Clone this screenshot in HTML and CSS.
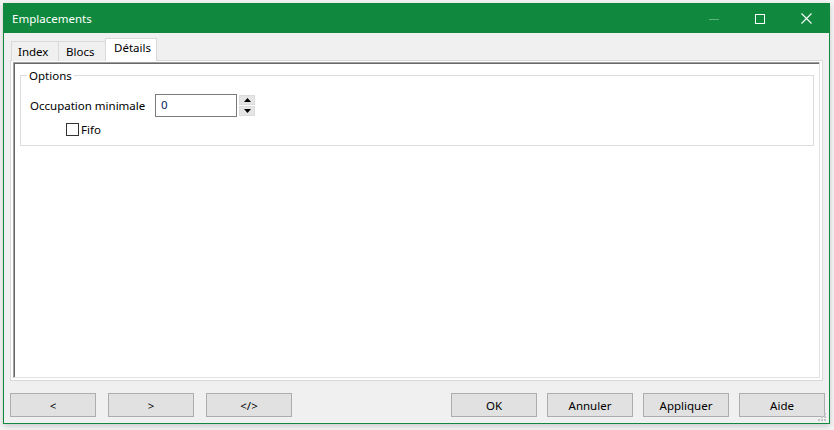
FILE: index.html
```html
<!DOCTYPE html>
<html lang="fr">
<head>
<meta charset="utf-8">
<title>Emplacements</title>
<link rel="stylesheet" href="styles.css">
</head>
<body>
<div class="window">
  <div class="titlebar">
    <span class="title">Emplacements</span>
    <div class="controls">
      <div class="cbtn"><svg width="10" height="10" viewBox="0 0 10 10"><line x1="0" y1="5.5" x2="10" y2="5.5" stroke="#5fb27f" stroke-width="1"/></svg></div>
      <div class="cbtn"><svg width="10" height="10" viewBox="0 0 10 10"><rect x="0.5" y="0.5" width="9" height="9" fill="none" stroke="#fff" stroke-width="1"/></svg></div>
      <div class="cbtn"><svg width="11" height="11" viewBox="0 0 11 11"><path d="M0.5 0.5 L10.5 10.5 M10.5 0.5 L0.5 10.5" stroke="#fff" stroke-width="1.1"/></svg></div>
    </div>
  </div>
  <div class="client">
    <div class="tabs">
      <div class="tab tab-index">Index</div>
      <div class="tab tab-blocs">Blocs</div>
      <div class="tab tab-details active">Détails</div>
    </div>
    <div class="pane">
      <div class="sheet">
        <fieldset class="group">
          <legend>Options</legend>
          <div class="row">
            <span class="label">Occupation minimale</span>
            <div class="input">0</div>
            <div class="spin">
              <div class="spin-btn"><svg width="7" height="4" viewBox="0 0 7 4"><path d="M3.5 0 L7 4 L0 4 Z" fill="#000"/></svg></div>
              <div class="spin-btn"><svg width="7" height="4" viewBox="0 0 7 4"><path d="M0 0 L7 0 L3.5 4 Z" fill="#000"/></svg></div>
            </div>
          </div>
          <div class="check"><span class="box"></span><span>Fifo</span></div>
        </fieldset>
      </div>
    </div>
    <div class="buttons">
      <div class="btn-group">
        <div class="btn">&lt;</div>
        <div class="btn">&gt;</div>
        <div class="btn">&lt;/&gt;</div>
      </div>
      <div class="btn-group right">
        <div class="btn">OK</div>
        <div class="btn">Annuler</div>
        <div class="btn">Appliquer</div>
        <div class="btn">Aide</div>
      </div>
    </div>
    <svg class="grip" width="9" height="9" viewBox="0 0 9 9">
      <rect x="6" y="0" width="2" height="2" fill="#c4c4c4"/>
      <rect x="3" y="3" width="2" height="2" fill="#c4c4c4"/>
      <rect x="6" y="3" width="2" height="2" fill="#c4c4c4"/>
      <rect x="0" y="6" width="2" height="2" fill="#c4c4c4"/>
      <rect x="3" y="6" width="2" height="2" fill="#c4c4c4"/>
      <rect x="6" y="6" width="2" height="2" fill="#c4c4c4"/>
    </svg>
  </div>
</div>
</body>
</html>
```
FILE: styles.css
```css
* { box-sizing: border-box; }
html, body { margin: 0; padding: 0; }
body {
  background: #f4f4f4;
  font-family: "Noto Sans", "Open Sans", sans-serif;
  font-size: 11.5px;
  color: #000;
  width: 834px;
  height: 430px;
  overflow: hidden;
  padding: 3px 0 0 3px;
}
.window {
  width: 827px;
  height: 421px;
  border: 1px solid #10893e;
  background: #f0f0f0;
  display: flex;
  flex-direction: column;
  box-shadow: 0 2px 6px rgba(0,0,0,0.18);
}
.titlebar {
  height: 29px;
  background: #10893e;
  display: flex;
  align-items: center;
  flex: none;
}
.title {
  color: #fff;
  padding-left: 8px;
  font-size: 11.5px;
  flex: 1;
}
.controls { display: flex; height: 29px; }
.cbtn {
  width: 46px;
  height: 29px;
  display: flex;
  align-items: center;
  justify-content: center;
}
.cbtn svg { display: block; }
.client {
  flex: 1;
  display: flex;
  flex-direction: column;
  padding: 5px 6px 6px 6px;
  position: relative;
}
.tabs {
  display: flex;
  align-items: flex-end;
  height: 23px;
  padding-left: 1px;
  position: relative;
  z-index: 1;
}
.tab {
  height: 20px;
  border: 1px solid #d9d9d9;
  border-bottom: none;
  background: #f0f0f0;
  margin-right: -1px;
  line-height: 18px;
  padding-top: 1px;
}
.tab-index { width: 48px; padding-left: 6px; }
.tab-blocs { width: 48px; padding-left: 7px; }
.tab-details { width: 52px; padding-left: 8px; }
.tab.active {
  height: 23px;
  background: #fff;
  padding-top: 0;
  line-height: 18px;
}
.pane {
  flex: 1;
  border: 1px solid #d9d9d9;
  background: #fff;
  margin-top: -1px;
  padding: 1px 2px 2px 2px;
  display: flex;
}
.sheet {
  flex: 1;
  border-top: 1px solid #a0a0a0;
  border-left: 1px solid #a0a0a0;
  border-right: 1px solid #e3e3e3;
  border-bottom: 1px solid #e3e3e3;
  box-shadow: inset 1px 1px 0 #696969;
  background: #fff;
  padding: 5px 5px 0 6px;
}
.group {
  margin: 0;
  border: 1px solid #dcdcdc;
  padding: 0 8px 9px 9px;
  min-width: 0;
}
.group legend {
  padding: 0 2px;
  margin-left: -3px;
  line-height: 15px;
}
.row {
  display: flex;
  align-items: center;
  margin-top: 11px;
  height: 23px;
}
.label { width: 125px; }
.input {
  width: 82px;
  height: 23px;
  border: 1px solid #7a7a7a;
  padding-left: 5px;
  line-height: 20px;
  color: #0a246a;
}
.spin {
  margin-left: 2px;
  display: flex;
  flex-direction: column;
  gap: 1px;
  height: 22px;
  justify-content: center;
}
.spin-btn {
  width: 16px;
  height: 10px;
  background: #e5e5e5;
  border: 1px solid #dcdcdc;
  display: flex;
  align-items: center;
  justify-content: center;
}
.spin-btn svg { display: block; }
.check {
  display: flex;
  align-items: center;
  margin-top: 6px;
  margin-left: 36px;
  height: 13px;
  gap: 2px;
}
.box {
  width: 13px;
  height: 13px;
  border: 1px solid #333;
  background: #fff;
}
.buttons {
  display: flex;
  justify-content: space-between;
  margin-top: 12px;
  margin-right: -2px;
  flex: none;
}
.btn-group { display: flex; gap: 12px; }
.btn-group.right { gap: 10px; }
.btn {
  width: 86px;
  height: 24px;
  background: #e1e1e1;
  border: 1px solid #adadad;
  display: flex;
  align-items: center;
  justify-content: center;
}
.grip {
  position: absolute;
  right: 2px;
  bottom: 1px;
  display: block;
}
```
